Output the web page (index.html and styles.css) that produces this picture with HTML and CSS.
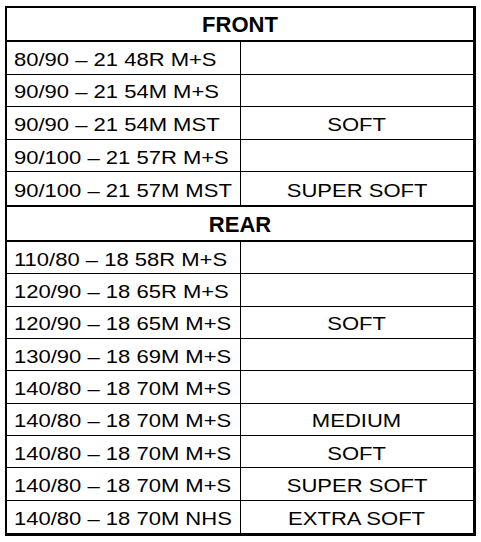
FILE: index.html
```html
<!DOCTYPE html>
<html>
<head>
<meta charset="utf-8">
<link rel="stylesheet" href="styles.css">
</head>
<body>
<div class="sheet">
  <div class="head">FRONT</div>
  <div class="grid front">
    <div class="c l"><span class="t">80/90 – 21 48R M+S</span></div><div class="c r"></div>
    <div class="c l"><span class="t">90/90 – 21 54M M+S</span></div><div class="c r"></div>
    <div class="c l"><span class="t">90/90 – 21 54M MST</span></div><div class="c r"><span class="t">SOFT</span></div>
    <div class="c l"><span class="t">90/100 – 21 57R M+S</span></div><div class="c r"></div>
    <div class="c l"><span class="t">90/100 – 21 57M MST</span></div><div class="c r"><span class="t">SUPER SOFT</span></div>
  </div>
  <div class="head second">REAR</div>
  <div class="grid rear">
    <div class="c l"><span class="t">110/80 – 18 58R M+S</span></div><div class="c r"></div>
    <div class="c l"><span class="t">120/90 – 18 65R M+S</span></div><div class="c r"></div>
    <div class="c l"><span class="t">120/90 – 18 65M M+S</span></div><div class="c r"><span class="t">SOFT</span></div>
    <div class="c l"><span class="t">130/90 – 18 69M M+S</span></div><div class="c r"></div>
    <div class="c l"><span class="t">140/80 – 18 70M M+S</span></div><div class="c r"></div>
    <div class="c l"><span class="t">140/80 – 18 70M M+S</span></div><div class="c r"><span class="t">MEDIUM</span></div>
    <div class="c l"><span class="t">140/80 – 18 70M M+S</span></div><div class="c r"><span class="t">SOFT</span></div>
    <div class="c l"><span class="t">140/80 – 18 70M M+S</span></div><div class="c r"><span class="t">SUPER SOFT</span></div>
    <div class="c l"><span class="t">140/80 – 18 70M NHS</span></div><div class="c r"><span class="t">EXTRA SOFT</span></div>
  </div>
</div>
</body>
</html>
```

FILE: styles.css
```css
html, body {
  margin: 0;
  background: #fff;
}
body {
  font-family: "Liberation Sans", Arial, sans-serif;
  color: #000;
}
.sheet {
  margin: 6px 0 0 5px;
  width: 471px;
  box-sizing: border-box;
  border-style: solid;
  border-color: #000;
  border-width: 2px 3px 3px 2px;
}
.head {
  height: 30px;
  padding-top: 2px;
  display: flex;
  align-items: center;
  justify-content: center;
  font-weight: bold;
  font-size: 22px;
  border-bottom: 2px solid #000;
}
.head.second {
  height: 30px;
  padding-top: 3px;
  border-top: 2px solid #000;
}
.grid {
  display: grid;
  grid-template-columns: 234px 1fr;
}
.front {
  grid-auto-rows: 32.6px;
}
.rear {
  grid-auto-rows: 32.333px;
}
.c {
  box-sizing: border-box;
  border-bottom: 1px solid #000;
  display: flex;
  align-items: center;
  padding-top: 4px;
  font-size: 18.5px;
  min-width: 0;
}
.c:nth-last-child(-n+2) {
  border-bottom: none;
}
.l {
  border-right: 1px solid #000;
  padding-left: 7px;
}
.r {
  justify-content: center;
}
.t {
  display: inline-block;
  white-space: nowrap;
  transform: scaleX(1.19);
  transform-origin: left center;
}
.r .t {
  transform-origin: center center;
}
```
